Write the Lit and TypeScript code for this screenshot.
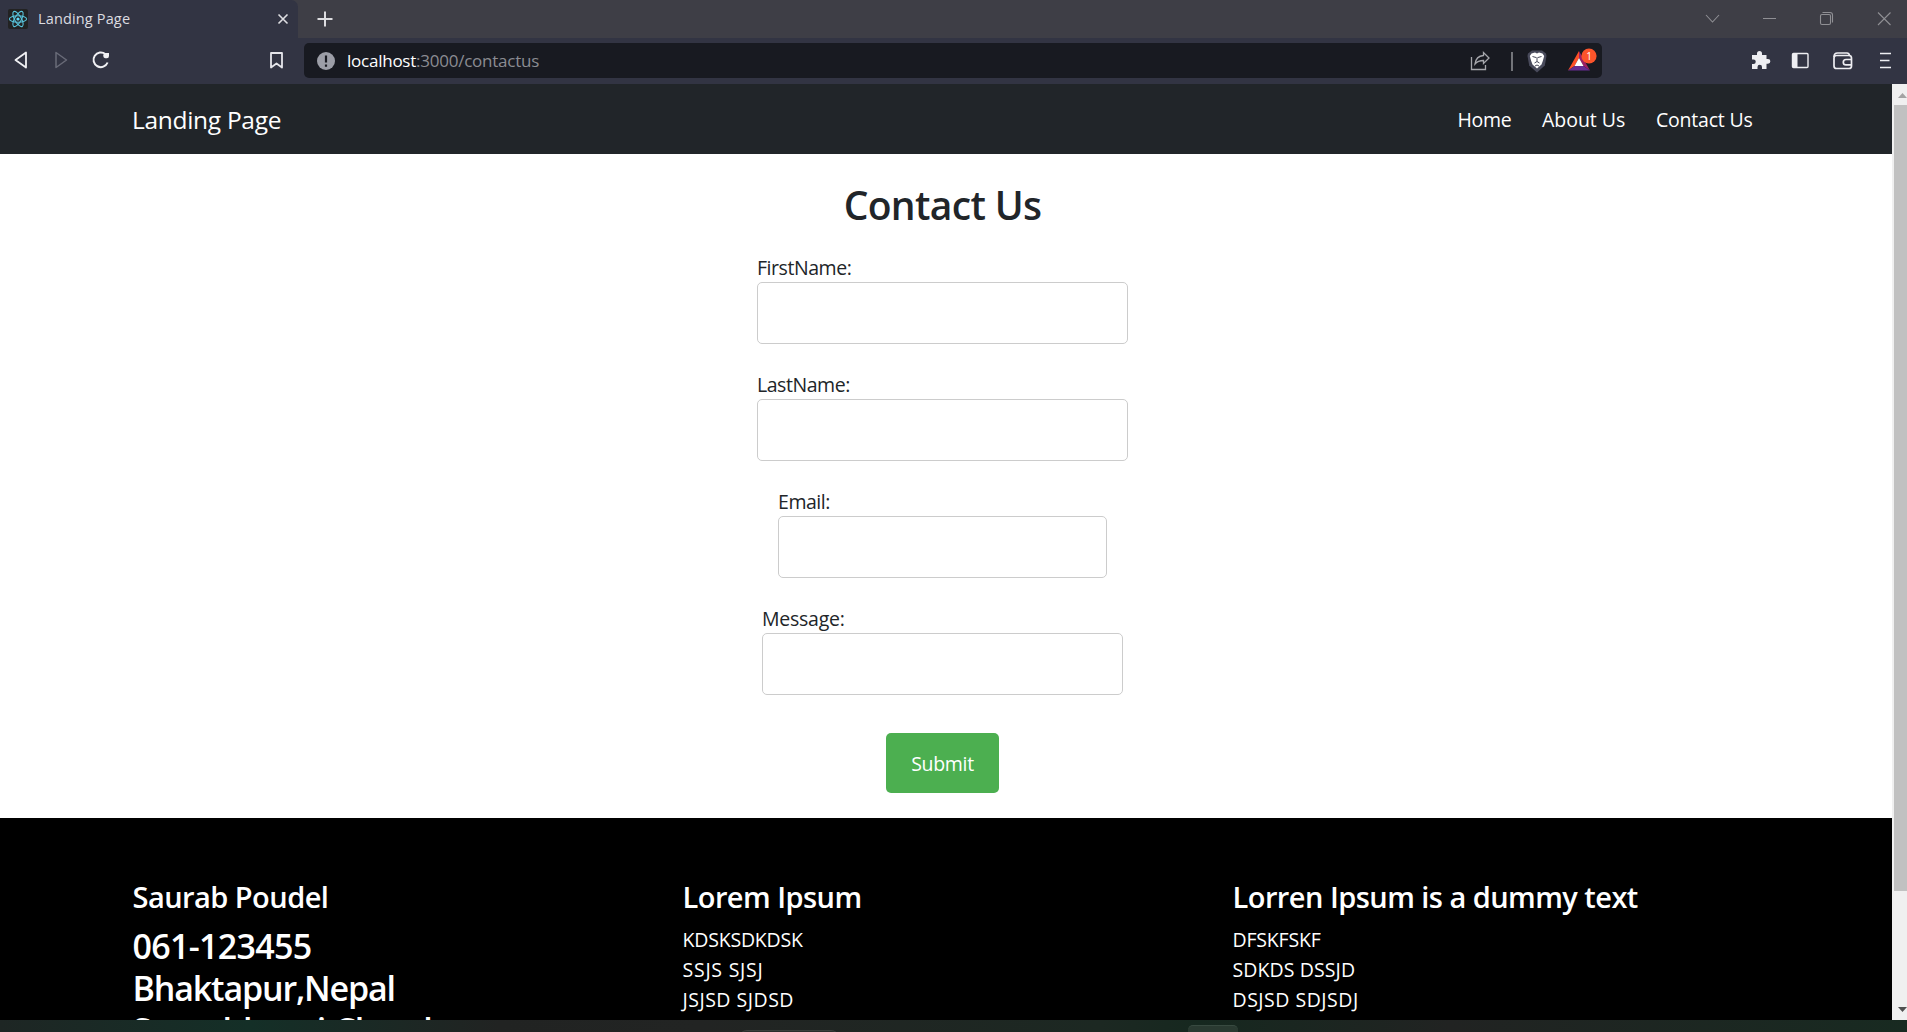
import { LitElement, html, css, svg } from "lit";
import { customElement } from "lit/decorators.js";

const FIELDS = [
  { label: "FirstName:", cls: "first" },
  { label: "LastName:", cls: "last" },
  { label: "Email:", cls: "email" },
  { label: "Message:", cls: "message" },
];

@customElement("browser-chrome")
class BrowserChrome extends LitElement {
  static styles = css`
    :host { display: block; font-family: "Open Sans", "Noto Sans", sans-serif; }
    svg { display: block; overflow: visible; flex: none; }
    .tabs { height: 38px; background: #3e3e46; display: flex; align-items: stretch; }
    .tab { box-sizing: border-box; width: 298px; background: #323443; border-radius: 0 7px 0 0; display: flex; align-items: center; padding: 0 10px 0 8px; }
    .title { flex: 1; margin-left: 10px; font-size: 14.5px; line-height: 20px; color: #dcdce0; font-weight: 500; letter-spacing: 0.15px; }
    .plus { margin: 11px 0 0 19px; }
    .window { margin-left: auto; display: flex; align-items: center; padding-right: 15px; }
    .bar { box-sizing: border-box; height: 46px; padding-bottom: 1px; background: #323443; display: flex; align-items: center; }
    .nav { box-sizing: border-box; width: 304px; display: flex; align-items: center; padding-bottom: 1px; }
    .back { margin-left: 14px; }
    .fwd { margin-left: 28px; }
    .reload { margin-left: 24px; }
    .mark { margin-left: auto; margin-right: 21px; }
    .address { box-sizing: border-box; width: 1298px; height: 35px; background: #181a21; border-radius: 5px; display: flex; align-items: center; padding: 0 5px 0 13px; }
    .url { margin-left: 12px; font-size: 17px; line-height: 24px; color: #8b8c92; flex: 1; letter-spacing: -0.24px; }
    .host { color: #fff; }
    .actions { margin-left: auto; display: flex; align-items: center; padding-right: 15px; padding-bottom: 1px; }
  `;

  render() {
    return html`
      <div class="tabs">
        <div class="tab">
          <svg width="20" height="20" viewBox="0 0 20 20">
            <rect width="20" height="20" rx="2" fill="#222"/>
            <g fill="none" stroke="#58c4dc" stroke-width="1.1">
              ${[0, 60, 120].map((a) => svg`<ellipse cx="10" cy="10" rx="8.6" ry="3.3" transform="rotate(${a} 10 10)"/>`)}
            </g>
            <circle cx="10" cy="10" r="1.6" fill="#61dafb"/>
          </svg>
          <span class="title">Landing Page</span>
          <svg width="10" height="10" viewBox="0 0 10 10"><path d="M0.5 0.5L9.5 9.5M9.5 0.5L0.5 9.5" stroke="#dedee2" stroke-width="1.6"/></svg>
        </div>
        <svg class="plus" width="16" height="16" viewBox="0 0 16 16"><path d="M8 0.5V15.5M0.5 8H15.5" stroke="#dcdce0" stroke-width="2"/></svg>
        <div class="window">
          <svg width="201" height="38" viewBox="0 0 201 38" fill="none" stroke="#8f8f94" stroke-width="1.1">
            <path d="M15 15L21.500 22L28 15M72 18.500H85"/>
            <rect x="129.500" y="14.500" width="10" height="10" rx="1.500"/>
            <path d="M131.500 12.500H139Q141.500 12.500 141.500 15V22.500M187 12.500L199.500 25M199.500 12.500L187 25"/>
          </svg>
        </div>
      </div>
      <div class="bar">
        <div class="nav">
          <svg class="back" width="13" height="18" viewBox="0 0 13 18"><path d="M12 1.500V16.500L1.500 9Z" fill="none" stroke="#f1f1f4" stroke-width="1.800" stroke-linejoin="round"/></svg>
          <svg class="fwd" width="13" height="18" viewBox="0 0 13 18"><path d="M1 1.500V16.500L11.500 9Z" fill="none" stroke="#696b78" stroke-width="1.500" stroke-linejoin="round"/></svg>
          <svg class="reload" width="18" height="18" viewBox="0 0 18 18"><path d="M13.500 3.200A7.300 7.300 0 1 0 15.600 11.500" fill="none" stroke="#f1f1f4" stroke-width="2"/><path d="M11.300 4.500Q11.300 2 14 2H17V5Q17 7.200 14.800 7.200H13.500Q11.300 7.200 11.300 4.500Z" fill="#f1f1f4"/></svg>
          <svg class="mark" width="13" height="17" viewBox="0 0 13 17"><path d="M1 1H12V15.500L6.500 11.500L1 15.500Z" fill="none" stroke="#e5e5ea" stroke-width="1.800" stroke-linejoin="round"/></svg>
        </div>
        <div class="address">
          <svg width="18" height="18" viewBox="0 0 18 18"><circle cx="9" cy="9" r="9" fill="#9c9ea7"/><path d="M9 3.500V10.500M9 12.500V14.700" stroke="#181a21" stroke-width="2.200"/></svg>
          <div class="url"><span class="host">localhost</span>:3000/contactus</div>
          <svg width="127" height="36" viewBox="0 0 127 36">
            <g fill="none" stroke="#a5a6ab" stroke-width="1.300">
              <path d="M1.500 14V26.500H15.500V22"/>
              <path d="M5 21Q6 13 13.500 12.500V9.500L19 15L13.500 20.500V17.500Q8 17.500 5 21Z"/>
              <path d="M42 9V28"/>
            </g>
            <path d="M58 10.500L62 7.500H72L76 10.500L76.500 13L74.800 22.500L67 29.500L59.200 22.500L57.500 13Z" fill="#484a5b"/>
            <path d="M61.500 10.500L65 9.500L67 10.500L69 9.500L72.500 10.500L74.200 13L72.800 18L71.500 21.500L67 25.500L62.500 21.500L61.200 18L59.800 13Z" fill="#fff"/>
            <path d="M62.500 13.500L66 14.500M71.500 13.500L68 14.500M67 14V18.500M64.500 20L67 18.500L69.500 20M65 23L67 22L69 23" stroke="#484a5b" stroke-width="1" fill="none"/>
            <path d="M109 8L98 27.500L104.500 23L109 15Z" fill="#ff5026"/>
            <path d="M109 8L120 27.500L113.500 23L109 15Z" fill="#9e1f63"/>
            <path d="M98 27.500H120L113.500 23H104.500Z" fill="#662d91"/>
            <path d="M109 15L104.500 23H113.500Z" fill="#fff"/>
            <circle cx="119" cy="13" r="7.600" fill="#fb542b"/>
            <text x="119" y="16.500" fill="#fff" font-size="10" text-anchor="middle">1</text>
          </svg>
        </div>
        <div class="actions">
          <svg width="141" height="24" viewBox="0 0 141 24">
            <path d="M1 7H6V5.500A2.500 2.500 0 0 1 11 5.500V7H15.500V11H17A2.300 2.300 0 0 1 17 15.700H15.500V21H11V19A2.200 2.200 0 0 0 6.500 19V21H1V16H2.500A2.200 2.200 0 0 0 2.500 11.500H1Z" fill="#eeeef2"/>
            <rect x="41.500" y="5.500" width="15.500" height="14" rx="1" fill="none" stroke="#eeeef2" stroke-width="1.400"/><path d="M42 5.500H46.500V19.500H42Z" fill="#eeeef2"/>
            <g fill="none" stroke="#eeeef2" stroke-width="1.700"><rect x="83" y="7.500" width="17.500" height="13" rx="2.500"/><path d="M83 9Q83 5 86.500 5H96Q98 5 98.500 7.500M100.500 11.500H95A2.700 2.700 0 0 0 95 16.900H100.500"/></g>
            <path d="M129 5.500H140M129 12.500H138.500M129 19.500H140" stroke="#eeeef2" stroke-width="1.600"/>
          </svg>
        </div>
      </div>
    `;
  }
}

@customElement("app-root")
class AppRoot extends LitElement {
  static styles = css`
    :host { display: flex; flex-direction: column; height: 1032px; overflow: hidden; font-family: "Open Sans", "Noto Sans", sans-serif; font-size: 19.5px; color: #212529; background: #fff; }
    .view { height: 936px; display: flex; overflow: hidden; }
    .page { width: 1892px; display: flex; flex-direction: column; }
    .navbar { box-sizing: border-box; height: 70px; flex: none; background: #212529; color: #fff; display: flex; align-items: center; justify-content: space-between; padding: 2px 139.5px 0 132px; }
    .brand { font-size: 24.5px; line-height: 38px; letter-spacing: -0.3px; }
    .links { display: flex; gap: 30.5px; line-height: 30px; }
    .home { letter-spacing: -0.3px; }
    .contact { letter-spacing: -0.2px; }
    .main { box-sizing: border-box; height: 664px; flex: none; display: flex; flex-direction: column; align-items: center; padding-top: 24px; padding-right: 7px; }
    .heading { margin: 0; font-size: 39px; line-height: 54px; font-weight: 600; letter-spacing: -0.65px; }
    .form { margin: 0; display: flex; flex-direction: column; align-items: center; padding-top: 21px; }
    .field { display: flex; flex-direction: column; height: 117px; }
    .label { line-height: 30px; height: 29px; letter-spacing: -0.45px; }
    .message .label { letter-spacing: -0.25px; }
    .input { box-sizing: border-box; height: 62px; border: 1px solid #ccc; border-radius: 5px; background: #fff; margin: 0; padding: 15px; font: inherit; outline: none; }
    .first .input, .last .input { width: 371px; }
    .email .input { width: 329px; }
    .message .input { width: 361px; }
    .submit { width: 113px; height: 60px; margin-top: 12px; padding: 0; border: 0; border-radius: 5px; background: #4caf50; color: #fff; font: inherit; letter-spacing: -0.3px; }
    .footer { flex: 1; background: #000; color: #fff; display: grid; grid-template-columns: 550px 550px 550px; padding: 61px 0 0 132.5px; align-content: start; }
    .col { display: flex; flex-direction: column; }
    .h4 { margin: 0 0 10px; font-size: 29px; line-height: 36px; font-weight: 600; letter-spacing: -0.54px; }
    .h3 { margin: 0; font-size: 34px; line-height: 42px; font-weight: 600; letter-spacing: -0.7px; }
    .city { letter-spacing: -1.15px; }
    .street { letter-spacing: -0.6px; }
    .item { line-height: 30px; letter-spacing: -0.2px; }
    .wide { letter-spacing: 0.5px; }
    .wider { letter-spacing: 0.75px; }
    .plain { letter-spacing: 0.1px; }
    .scroll { width: 15px; background: #f0f0f0; display: flex; flex-direction: column; align-items: flex-end; }
    .arrow { display: block; flex: none; }
    .thumb { width: 13px; height: 786px; background: #c1c1c1; }
    .down { margin-top: auto; }
    .taskbar { height: 12px; overflow: hidden; display: flex; align-items: flex-start; background: linear-gradient(90deg, #1e2624 0, #142f27 250px, #212322 500px, #222423 700px, #1c2822 1100px, #16281f 1200px, #212322 1450px, #182a21 1907px); }
    .search { flex: none; box-sizing: border-box; width: 100px; height: 20px; margin: 10px 0 0 739px; border-radius: 8px; border-top: 1px solid #3a3f3c; background: #2a2e2c; }
    .task { flex: none; box-sizing: border-box; width: 50px; height: 20px; margin: 5px 0 0 349px; border-radius: 5px; border-top: 1px solid #384a40; background: #2a3a31; }
  `;

  render() {
    return html`
      <browser-chrome></browser-chrome>
      <div class="view">
        <div class="page">
          <nav class="navbar">
            <span class="brand">Landing Page</span>
            <div class="links"><span class="home">Home</span><span>About Us</span><span class="contact">Contact Us</span></div>
          </nav>
          <main class="main">
            <h1 class="heading">Contact Us</h1>
            <form class="form">
              ${FIELDS.map((f) => html`<div class="field ${f.cls}"><label class="label">${f.label}</label><input class="input" /></div>`)}
              <button class="submit" type="button">Submit</button>
            </form>
          </main>
          <footer class="footer">
            <div class="col">
              <h4 class="h4">Saurab Poudel</h4>
              <h3 class="h3">061-123455</h3>
              <h3 class="h3 city">Bhaktapur,Nepal</h3>
              <h3 class="h3 street">Suryabhumi Chowk</h3>
            </div>
            <div class="col">
              <h4 class="h4">Lorem Ipsum</h4>
              <span class="item">KDSKSDKDSK</span><span class="item wider">SSJS SJSJ</span><span class="item wide">JSJSD SJDSD</span>
            </div>
            <div class="col">
              <h4 class="h4">Lorren Ipsum is a dummy text</h4>
              <span class="item">DFSKFSKF</span><span class="item plain">SDKDS DSSJD</span><span class="item wide">DSJSD SDJSDJ</span>
            </div>
          </footer>
        </div>
        <div class="scroll">
          <svg class="arrow" width="13" height="21" viewBox="0 0 13 21"><path d="M4 14L8.500 9L13 14Z" fill="#a3a3a3"/></svg>
          <div class="thumb"></div>
          <svg class="arrow down" width="13" height="21" viewBox="0 0 13 21"><path d="M4 8L8.500 13L13 8Z" fill="#505050"/></svg>
        </div>
      </div>
      <div class="taskbar"><div class="search"></div><div class="task"></div></div>
    `;
  }
}
